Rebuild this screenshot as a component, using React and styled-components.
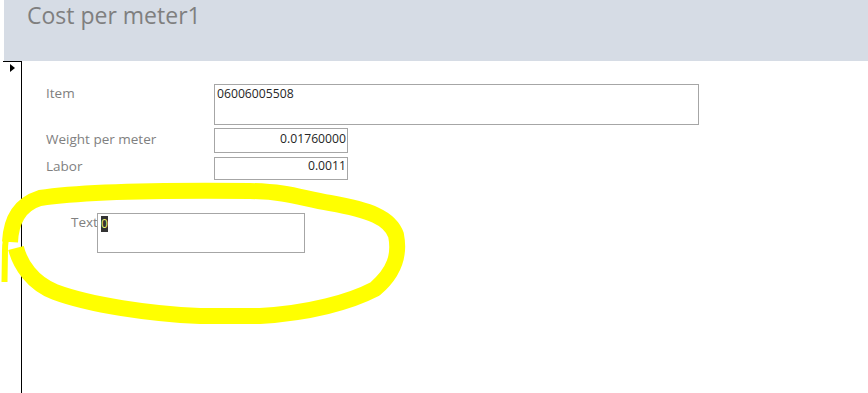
import React from 'react';
import styled, { createGlobalStyle } from 'styled-components';

const GlobalStyle = createGlobalStyle`
  html, body {
    margin: 0;
    padding: 0;
    background: #ffffff;
    font-family: "Open Sans", "Noto Sans", sans-serif;
  }
`;

const Page = styled.div`
  position: relative;
  width: 868px;
  height: 393px;
  overflow: hidden;
  background: #ffffff;
`;

const Header = styled.div`
  margin-left: 4px;
  height: 61px;
  background-color: #d6dce5;
  padding-left: 23px;
  box-sizing: border-box;

  h1 {
    margin: 0;
    font-size: 23px;
    line-height: 31px;
    font-weight: 400;
    color: #7f7f7f;
  }
`;

const Body = styled.div`
  display: flex;
  height: 332px;
`;

const Selector = styled.div`
  width: 22px;
  flex-shrink: 0;
  box-sizing: border-box;
  border-right: 1px solid #000;
  display: flex;
  flex-direction: column;
  align-items: flex-end;
`;

const SelectorCell = styled.div`
  width: 18px;
  height: 14px;
  border-top: 1px solid #000;
  box-sizing: border-box;
  display: flex;
  padding-left: 7px;
  padding-top: 2px;
`;

const Arrow = styled.span`
  width: 0;
  height: 0;
  border-top: 4px solid transparent;
  border-bottom: 4px solid transparent;
  border-left: 5px solid #000;
`;

const Form = styled.div`
  flex: 1;
  padding: 23px 0 0 24px;
`;

const Fields = styled.div`
  display: grid;
  grid-template-columns: 168px auto;
  align-items: start;
`;

const Label = styled.label`
  font-size: 13.5px;
  color: #808080;
  line-height: 18px;
  padding-top: ${p => p.$top || 0}px;
  margin-top: ${p => p.$gap || 0}px;
`;

const Box = styled.div`
  box-sizing: border-box;
  width: ${p => p.$w}px;
  height: ${p => p.$h}px;
  margin-top: ${p => p.$gap || 0}px;
  border: 1px solid #a6a6a6;
  font-size: 12.2px;
  color: #262626;
  line-height: 16px;
  padding: ${p => p.$top || 0}px 1px 0 2px;
  text-align: ${p => (p.$right ? 'right' : 'left')};
`;

const TextRow = styled.div`
  display: flex;
  align-items: flex-start;
  margin-top: 33px;
  padding-left: 25px;
`;

const TextLabel = styled.span`
  font-size: 13.5px;
  color: #808080;
  line-height: 18px;
  width: 26px;
`;

const Caret = styled.span`
  display: inline-block;
  margin: 2px 0 0 1px;
  width: 7px;
  text-align: center;
  background: #333333;
  color: #e6f06a;
  font-size: 12px;
  line-height: 16px;
`;

const Scribble = styled.svg`
  position: absolute;
  top: 0;
  left: 0;
  pointer-events: none;
`;

export default function App() {
  return (
    <Page>
      <GlobalStyle />
      <Header>
        <h1>Cost per meter1</h1>
      </Header>
      <Body>
        <Selector>
          <SelectorCell>
            <Arrow />
          </SelectorCell>
        </Selector>
        <Form>
          <Fields>
            <Label>Item</Label>
            <Box $w={485} $h={41} $top={1}>06006005508</Box>
            <Label $gap={3} $top={2}>Weight per meter</Label>
            <Box $w={134} $h={25} $gap={3} $top={2} $right>0.01760000</Box>
            <Label $gap={4}>Labor</Label>
            <Box $w={134} $h={23} $gap={4} $right>0.0011</Box>
          </Fields>
          <TextRow>
            <TextLabel>Text</TextLabel>
            <Box $w={208} $h={40}>
              <Caret>0</Caret>
            </Box>
          </TextRow>
        </Form>
      </Body>
      <Scribble width="868" height="393" viewBox="0 0 868 393">
        {/* tail where the pen started */}
        <path d="M4.5 282 L5 250 C5 244 6 238 8 234" fill="none" stroke="#ffff00" strokeWidth="6" />
        <path
          d="M10 242 C11 222 18 205 40 198 C80 192 150 190 250 191 C290 192 300 198 330 203 C370 210 390 218 396 235 C400 255 395 272 375 289 C350 302 310 313 260 316 L200 316 C150 314 90 305 55 292 C32 283 20 264 16 248"
          fill="none"
          stroke="#ffff00"
          strokeWidth="16"
          strokeLinecap="butt"
          strokeLinejoin="round"
        />
      </Scribble>
    </Page>
  );
}
